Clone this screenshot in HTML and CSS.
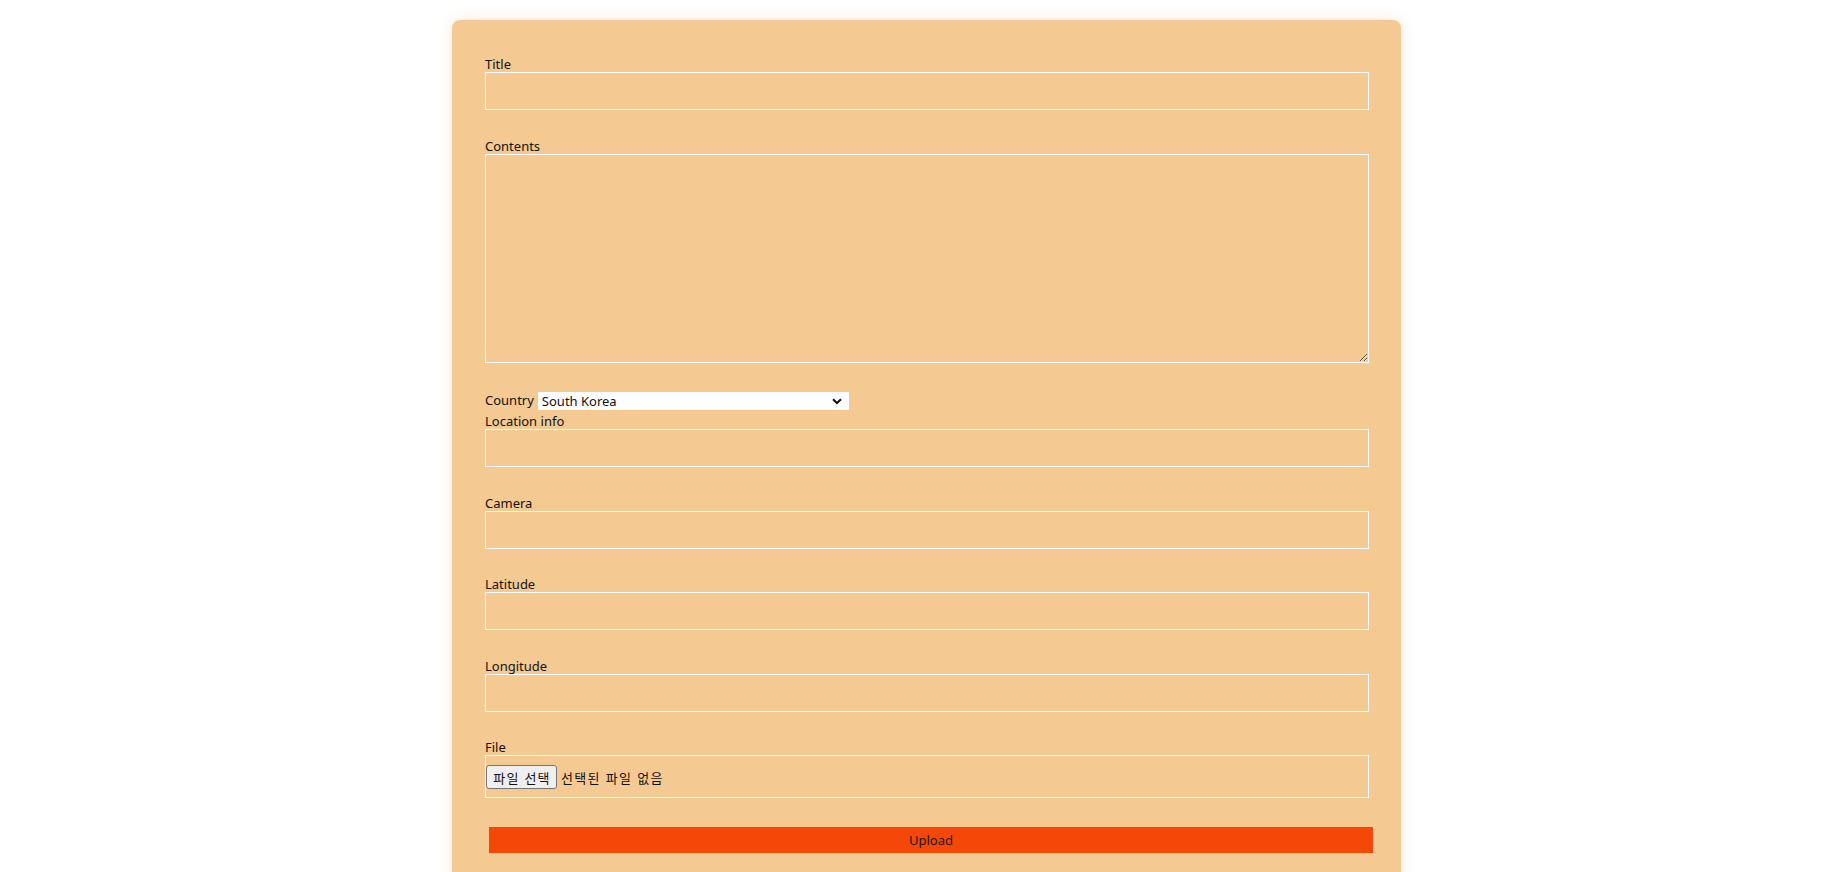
FILE: index.html
```html
<!DOCTYPE html>
<html lang="ko">
<head>
<meta charset="utf-8">
<title>Upload</title>
<link rel="stylesheet" href="styles.css">
</head>
<body>
<form class="card">
  <div class="field">
    <label class="label" for="title">Title</label>
    <input class="input" id="title" type="text">
  </div>
  <div class="field field-area">
    <label class="label" for="contents">Contents</label>
    <textarea class="textarea" id="contents"></textarea>
  </div>
  <div class="country-row">
    <label class="inline-label" for="country">Country</label>
    <div class="select-wrap">
      <select class="select" id="country">
        <option>South Korea</option>
      </select>
      <svg class="chevron" width="10" height="7" viewBox="0 0 10 7"><path d="M1 1.2 L5 5 L9 1.2" fill="none" stroke="#111" stroke-width="2"/></svg>
    </div>
  </div>
  <div class="field">
    <label class="label" for="location">Location info</label>
    <input class="input" id="location" type="text">
  </div>
  <div class="field">
    <label class="label" for="camera">Camera</label>
    <input class="input" id="camera" type="text">
  </div>
  <div class="field">
    <label class="label" for="lat">Latitude</label>
    <input class="input" id="lat" type="text">
  </div>
  <div class="field">
    <label class="label" for="lng">Longitude</label>
    <input class="input" id="lng" type="text">
  </div>
  <div class="field">
    <span class="label">File</span>
    <div class="file-box">
      <span class="file-btn">파일 선택</span>
      <span class="file-text">선택된 파일 없음</span>
    </div>
  </div>
  <button class="upload" type="button">Upload</button>
</form>
</body>
</html>
```
FILE: styles.css
```css
html, body {
  margin: 0;
  padding: 0;
  background: #ffffff;
}
body {
  font-family: "Noto Sans", "Noto Sans CJK KR", sans-serif;
  font-size: 13px;
  color: #111;
  padding: 20px 0 0 452px;
}
.card {
  width: 949px;
  box-sizing: border-box;
  padding: 37px 32px 32px 33px;
  background: #f4ca92;
  border-radius: 8px;
  box-shadow: 0 0 14px rgba(235, 190, 140, 0.35);
}
.field {
  margin-bottom: 28.5px;
}
.field-area {
  margin-bottom: 28.5px;
}
.label {
  display: block;
  line-height: 15px;
  height: 15px;
}
.input {
  display: block;
  box-sizing: border-box;
  width: 100%;
  height: 38px;
  margin: 0;
  border: 1px solid #fff;
  background: transparent;
  font: inherit;
  outline: none;
}
.textarea {
  display: block;
  box-sizing: border-box;
  width: 100%;
  height: 209px;
  margin: 0;
  border: 1px solid #fff;
  background: transparent;
  font: inherit;
  outline: none;
}
.country-row {
  display: flex;
  align-items: center;
  height: 19px;
  margin-bottom: 4px;
  gap: 4px;
}
.inline-label {
  line-height: 15px;
}
.select-wrap {
  position: relative;
  width: 311px;
  height: 18px;
}
.select {
  appearance: none;
  -webkit-appearance: none;
  display: block;
  width: 100%;
  height: 18px;
  margin: 0;
  padding: 0 0 0 4px;
  border: none;
  border-radius: 0;
  background: #fff;
  font: inherit;
  color: #111;
  line-height: 18px;
}
.chevron {
  position: absolute;
  right: 7px;
  top: 6px;
  pointer-events: none;
}
.file-box {
  display: flex;
  align-items: center;
  box-sizing: border-box;
  height: 43px;
  border: 1px solid #fff;
  padding: 1px 0 0 0;
  gap: 4px;
}
.file-btn {
  display: inline-flex;
  align-items: center;
  justify-content: center;
  box-sizing: border-box;
  width: 71px;
  height: 24px;
  padding-left: 1px;
  background: #efefef;
  border: 1px solid #767676;
  border-radius: 3px;
  font-family: "Noto Sans CJK KR", sans-serif;
  font-size: 13px;
  letter-spacing: 1.2px;
  color: #111;
}
.file-text {
  font-family: "Noto Sans CJK KR", sans-serif;
  font-size: 13px;
  letter-spacing: 1.3px;
}
.upload {
  display: block;
  box-sizing: border-box;
  width: 884px;
  height: 26px;
  margin: 29px 0 0 4px;
  padding: 0;
  border: none;
  background: #f54708;
  color: #1a1a1a;
  font-family: inherit;
  font-size: 13px;
}
```
